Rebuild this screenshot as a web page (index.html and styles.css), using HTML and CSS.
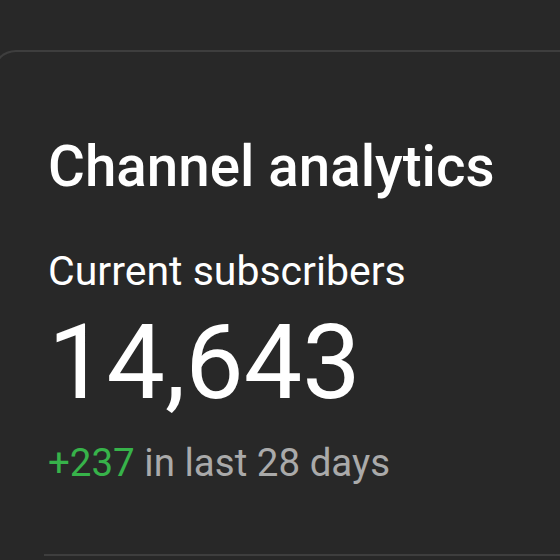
FILE: index.html
```html
<!DOCTYPE html>
<html lang="en">
<head>
  <meta charset="UTF-8">
  <title>Channel analytics</title>
  <meta name="viewport" content="width=device-width, initial-scale=1.0">
  <link rel="stylesheet" href="styles.css">
</head>
<body>
  <div class="card">
    <div class="card-body">
      <h1 class="title">Channel analytics</h1>
      <div class="label">Current subscribers</div>
      <div class="count">14,643</div>
      <div class="change"><span class="up">+237</span> in last 28 days</div>
    </div>
    <div class="divider"></div>
  </div>
</body>
</html>
```

FILE: styles.css
```css
body {
  margin: 0;
  background-color: #282828;
  font-family: Roboto, 'Noto Sans', sans-serif;
  color: #fff;
  overflow: hidden;
}
.card {
  margin: 50px 0 0 -8px;
  border: 2px solid #3e3e3e;
  border-right: none;
  border-bottom: none;
  border-radius: 24px 0 0 0;
  height: 504px;
}
.card-body {
  padding: 83px 0 0 54px;
}
.title {
  margin: 0;
  font-size: 56.5px;
  font-weight: 500;
  line-height: 64px;
}
.label {
  margin-top: 50px;
  font-size: 41px;
  line-height: 44px;
}
.count {
  margin-top: 10px;
  font-size: 104px;
  font-weight: 400;
  line-height: 120px;
}
.change {
  margin-top: 18px;
  font-size: 38.5px;
  line-height: 44px;
  color: #aaaaaa;
}
.up {
  color: #37b34a;
}
.divider {
  margin: 69px 0 0 50px;
  height: 2px;
  background-color: #3e3e3e;
}
```
